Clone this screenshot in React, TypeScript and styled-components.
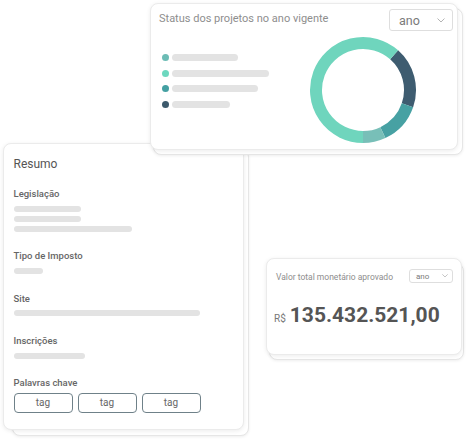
import React from 'react';
import styled, { createGlobalStyle } from 'styled-components';

const GlobalStyle = createGlobalStyle`
  html, body {
    margin: 0;
    padding: 0;
    background: #fff;
    font-family: Roboto, "Liberation Sans", Arial, sans-serif;
  }
`;

const Stage = styled.div`
  position: relative;
  width: 466px;
  height: 440px;
  overflow: hidden;
  background: #fff;
`;

/* each card sits on a free canvas, with a second sheet peeking out behind it */
const Stack = styled.div<{ $x: number; $y: number; $w: number; $h: number; $z: number }>`
  position: absolute;
  left: ${(p) => p.$x}px;
  top: ${(p) => p.$y}px;
  width: ${(p) => p.$w}px;
  height: ${(p) => p.$h}px;
  z-index: ${(p) => p.$z};
`;

const BackSheet = styled.div<{ $inset: string }>`
  position: absolute;
  inset: ${(p) => p.$inset};
  background: #fff;
  border: 1px solid #e6e6e6;
  border-radius: 8px;
  box-shadow: 0 1px 3px rgba(0, 0, 0, 0.07);
`;

const Card = styled.div`
  position: relative;
  height: 100%;
  box-sizing: border-box;
  background: #fff;
  border: 1px solid #ebebeb;
  border-radius: 8px;
  box-shadow: 0 1px 4px rgba(0, 0, 0, 0.08);
`;

const Header = styled.div<{ $pad: string }>`
  display: flex;
  justify-content: space-between;
  align-items: flex-start;
  padding: ${(p) => p.$pad};
`;

const CardTitle = styled.div<{ $size: number; $top: number }>`
  font-size: ${(p) => p.$size}px;
  line-height: 14px;
  padding-top: ${(p) => p.$top}px;
  color: #8e8e8e;
  white-space: nowrap;
`;

const Select = styled.div<{ $w: number; $h: number; $font: number }>`
  box-sizing: border-box;
  width: ${(p) => p.$w}px;
  height: ${(p) => p.$h}px;
  display: flex;
  align-items: center;
  justify-content: space-between;
  padding: 0 ${(p) => Math.round(p.$h * 0.3)}px 0 ${(p) => Math.round(p.$h * 0.42)}px;
  border: 1px solid #dedede;
  border-radius: 3px;
  font-size: ${(p) => p.$font}px;
  color: #7a7a7a;
`;

const Chevron = ({ size }: { size: number }) => (
  <svg width={size} height={size * 0.6} viewBox="0 0 10 6" fill="none">
    <path d="M1 1l4 4 4-4" stroke="#a8a8a8" strokeWidth="1.1" strokeLinecap="round" strokeLinejoin="round" />
  </svg>
);

const ChartBody = styled.div`
  display: flex;
  margin-top: 5px;
`;

const Legend = styled.div`
  width: 147px;
  padding: 18px 0 0 11px;
  display: flex;
  flex-direction: column;
  gap: 8.7px;
`;

const LegendRow = styled.div`
  display: flex;
  align-items: center;
  gap: 3px;
  height: 7px;
`;

const Dot = styled.span<{ $color: string }>`
  width: 7px;
  height: 7px;
  border-radius: 50%;
  background: ${(p) => p.$color};
  flex: none;
`;

const Placeholder = styled.span<{ $w: number; $h?: number }>`
  display: block;
  width: ${(p) => p.$w}px;
  height: ${(p) => p.$h ?? 6}px;
  border-radius: 4px;
  background: #e3e3e3;
`;

const Summary = styled.div`
  padding: 13px 9px 13px 9.5px;
  display: flex;
  flex-direction: column;
`;

const SummaryTitle = styled.div`
  font-size: 12px;
  line-height: 14px;
  color: #555;
  margin-bottom: 17px;
`;

const Sections = styled.div`
  display: flex;
  flex-direction: column;
  gap: 18.6px;
`;

const Section = styled.div`
  display: flex;
  flex-direction: column;
`;

const Label = styled.div`
  font-size: 9.5px;
  line-height: 12px;
  font-weight: 500;
  color: #666;
  margin-bottom: 5.7px;
`;

const Bars = styled.div`
  display: flex;
  flex-direction: column;
  gap: 4px;
`;

const Tags = styled.div`
  display: flex;
  gap: 5px;
  margin-top: -2px;
`;

const Tag = styled.div`
  box-sizing: border-box;
  width: 59px;
  height: 20px;
  display: flex;
  align-items: center;
  justify-content: center;
  border: 1px solid #6f8189;
  border-radius: 4px;
  font-size: 10px;
  color: #666;
`;

const Amount = styled.div`
  display: flex;
  align-items: baseline;
  gap: 4px;
  padding-left: 7px;
  margin-top: 19px;
`;

const Currency = styled.span`
  font-size: 10px;
  color: #777;
`;

const Value = styled.span`
  font-size: 21px;
  line-height: 24px;
  font-weight: 700;
  color: #555;
`;

const polar = (cx: number, cy: number, r: number, deg: number) => {
  const a = ((deg - 90) * Math.PI) / 180;
  return [cx + r * Math.cos(a), cy + r * Math.sin(a)];
};

const arc = (from: number, to: number) => {
  const [x1, y1] = polar(54, 54, 47, from);
  const [x2, y2] = polar(54, 54, 47, to);
  const large = to - from > 180 ? 1 : 0;
  return `M${x1} ${y1}A47 47 0 ${large} 1 ${x2} ${y2}`;
};

const segments = [
  { from: 41.5, to: 109, color: '#3e5c70' },
  { from: 109, to: 155, color: '#47a1a3' },
  { from: 155, to: 180, color: '#78bfb8' },
  { from: 180, to: 401.5, color: '#6fd5bd' },
];

const Donut = () => (
  <svg width="108" height="108" viewBox="0 0 108 108">
    {segments.map((s) => (
      <path key={s.color} d={arc(s.from, s.to)} stroke={s.color} strokeWidth="12" fill="none" />
    ))}
  </svg>
);

const legend = [
  { color: '#6cbcb5', w: 66 },
  { color: '#6dd8bf', w: 97 },
  { color: '#44a0a2', w: 86 },
  { color: '#3d5a6c', w: 58 },
];

const sections = [
  { label: 'Legislação', bars: [67, 67, 118] },
  { label: 'Tipo de Imposto', bars: [29] },
  { label: 'Site', bars: [186] },
  { label: 'Inscrições', bars: [71] },
];

const App: React.FC = () => (
  <>
    <GlobalStyle />
    <Stage>
      <Stack $x={150} $y={3} $w={308} $h={147} $z={2}>
        <BackSheet $inset="5px -5px -5px 3px" />
        <Card>
          <Header $pad="5px 4px 0 8px">
            <CardTitle $size={11} $top={2.5}>Status dos projetos no ano vigente</CardTitle>
            <Select $w={64} $h={22} $font={12.5}>
              ano
              <Chevron size={8} />
            </Select>
          </Header>
          <ChartBody>
            <Legend>
              {legend.map((l) => (
                <LegendRow key={l.color}>
                  <Dot $color={l.color} />
                  <Placeholder $w={l.w} $h={7} />
                </LegendRow>
              ))}
            </Legend>
            <Donut />
          </ChartBody>
        </Card>
      </Stack>

      <Stack $x={3} $y={143} $w={241} $h={287} $z={1}>
        <BackSheet $inset="6px -5px -6px 9px" />
        <Card>
          <Summary>
            <SummaryTitle>Resumo</SummaryTitle>
            <Sections>
              {sections.map((s) => (
                <Section key={s.label}>
                  <Label>{s.label}</Label>
                  <Bars>
                    {s.bars.map((w, i) => (
                      <Placeholder key={i} $w={w} />
                    ))}
                  </Bars>
                </Section>
              ))}
              <Section>
                <Label>Palavras chave</Label>
                <Tags>
                  <Tag>tag</Tag>
                  <Tag>tag</Tag>
                  <Tag>tag</Tag>
                </Tags>
              </Section>
            </Sections>
          </Summary>
        </Card>
      </Stack>

      <Stack $x={266} $y={258} $w={196} $h={97} $z={1}>
        <BackSheet $inset="5px -2px -5px 3px" />
        <Card>
          <Header $pad="10px 8px 0 9px">
            <CardTitle $size={8.5} $top={1}>Valor total monetário aprovado</CardTitle>
            <Select $w={44} $h={14} $font={8}>
              ano
              <Chevron size={6} />
            </Select>
          </Header>
          <Amount>
            <Currency>R$</Currency>
            <Value>135.432.521,00</Value>
          </Amount>
        </Card>
      </Stack>
    </Stage>
  </>
);

export default App;
